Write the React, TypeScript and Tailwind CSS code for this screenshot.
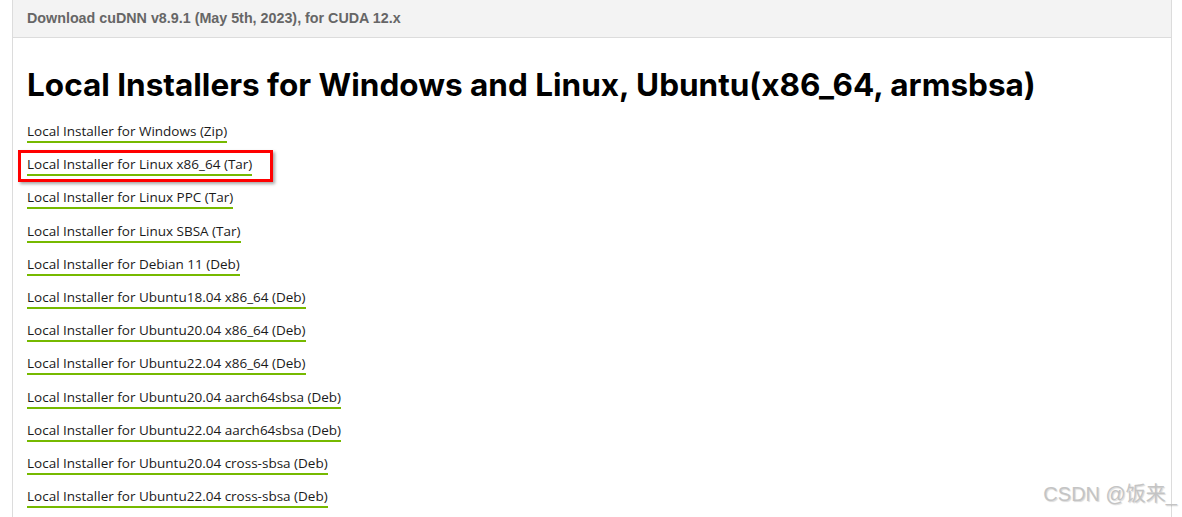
const links = [
  "Local Installer for Windows (Zip)",
  "Local Installer for Linux x86_64 (Tar)",
  "Local Installer for Linux PPC (Tar)",
  "Local Installer for Linux SBSA (Tar)",
  "Local Installer for Debian 11 (Deb)",
  "Local Installer for Ubuntu18.04 x86_64 (Deb)",
  "Local Installer for Ubuntu20.04 x86_64 (Deb)",
  "Local Installer for Ubuntu22.04 x86_64 (Deb)",
  "Local Installer for Ubuntu20.04 aarch64sbsa (Deb)",
  "Local Installer for Ubuntu22.04 aarch64sbsa (Deb)",
  "Local Installer for Ubuntu20.04 cross-sbsa (Deb)",
  "Local Installer for Ubuntu22.04 cross-sbsa (Deb)",
];

export default function App() {
  return (
    <div className="relative h-[517px] w-[1182px] overflow-hidden bg-white">
      <div className="ml-[12px] h-full w-[1160px] border-x border-[#dcdcdc]">
        <div className="flex h-[38px] items-center border-b border-[#dcdcdc] bg-[#f3f3f3] pl-[14px] font-['Liberation_Sans',sans-serif] text-[14.3px] font-bold text-[#666]">
          Download cuDNN v8.9.1 (May 5th, 2023), for CUDA 12.x
        </div>
        <div className="pl-[14px]">
          <h2 className="mt-[28px] font-['Inter',sans-serif] text-[31.5px] leading-[38px] font-bold text-black">
            Local Installers for Windows and Linux, Ubuntu(x86_64, armsbsa)
          </h2>
          <ul className="mt-[19px] flex flex-col gap-[13.2px]">
            {links.map((l, i) => (
              <li key={l} className="flex">
                <span
                  className={
                    i === 1
                      ? "-my-[6px] -mr-[21px] -ml-[9px] border-[3px] border-[#ff0000] py-[3px] pr-[18px] pl-[6px] shadow-[2px_2px_3px_rgba(0,0,0,0.35)]"
                      : ""
                  }
                >
                  <a className="block border-b-2 border-[#76b900] pb-[1px] font-['Open_Sans',sans-serif] text-[13.5px] leading-[17px] text-[#1a1a1a]">
                    {l}
                  </a>
                </span>
              </li>
            ))}
          </ul>
        </div>
      </div>
      <div className="absolute right-[5px] bottom-[8px] font-['Liberation_Sans','Noto_Sans_CJK_SC',sans-serif] text-[20px] text-[#c4c4c4] [text-shadow:1px_1px_1px_rgba(0,0,0,0.15)]">
        CSDN @饭来_
      </div>
    </div>
  );
}
